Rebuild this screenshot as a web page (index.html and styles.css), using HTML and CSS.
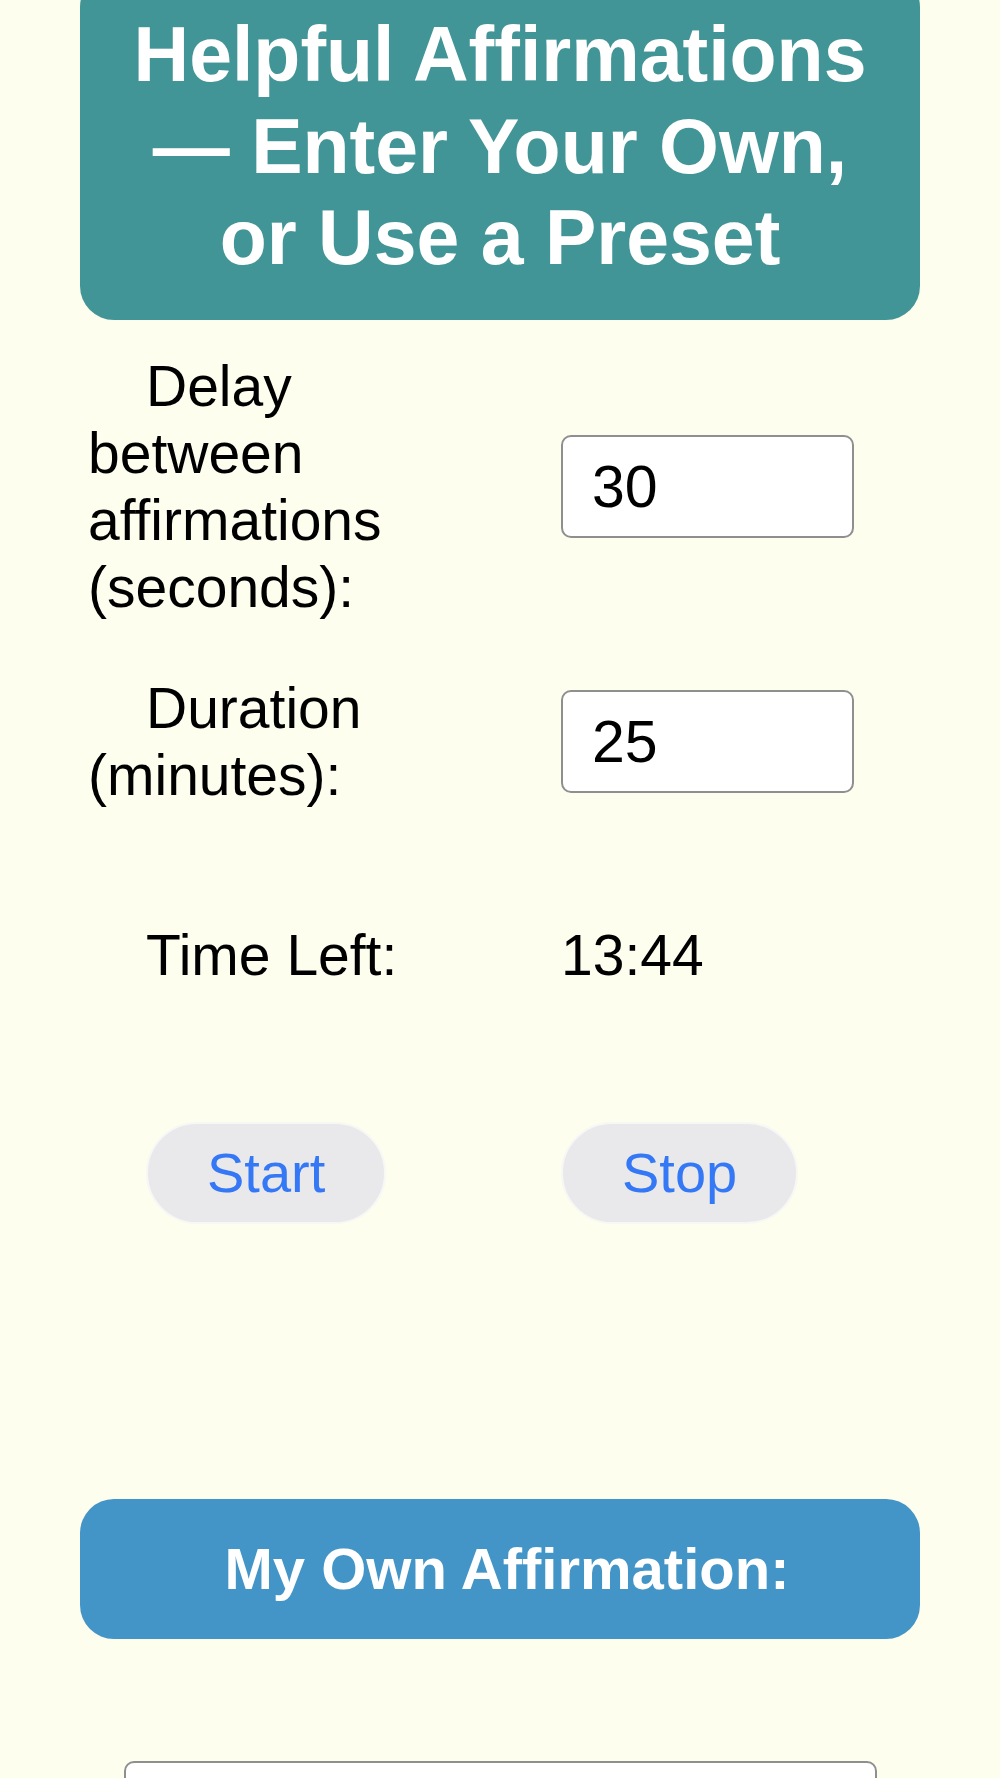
FILE: index.html
```html
<!DOCTYPE html>
<html lang="en">
<head>
    <meta charset="utf-8">
    <title>Helpful Affirmations</title>
    <link rel="stylesheet" href="styles.css">
</head>
<body>
    <header class="banner">
        <h1>Helpful Affirmations — Enter Your Own, or Use a Preset</h1>
    </header>
    <section class="settings">
        <div class="row">
            <label class="label" for="delay">Delay between affirmations (seconds):</label>
            <input type="text" id="delay" class="field" value="30">
        </div>
        <div class="row">
            <label class="label" for="duration">Duration (minutes):</label>
            <input type="text" id="duration" class="field" value="25">
        </div>
        <div class="row row-time">
            <span class="label">Time Left:</span>
            <span id="time_left">13:44</span>
        </div>
        <div class="row row-buttons">
            <div class="label"><button id="start">Start</button></div>
            <div><button id="stop">Stop</button></div>
        </div>
    </section>
    <h2 class="section-head">My Own Affirmation:</h2>
    <input type="text" id="own" class="own-field">
</body>
</html>
```
FILE: styles.css
```css
body {
    margin: 0;
    background-color: #fdfeee;
    font-family: "Liberation Sans", Arial, Helvetica, sans-serif;
    font-size: 57px;
    line-height: 67px;
    color: #000;
}
.banner {
    margin: -27px 80px 0 80px;
    padding: 36px 40px;
    border-radius: 34px;
    background-color: #429596;
    color: #fff;
    text-align: center;
}
.banner h1 {
    margin: 0;
    font-size: 77px;
    line-height: 91.5px;
    font-weight: 700;
}
.settings {
    margin-top: 33px;
    padding-left: 88px;
}
.row {
    display: grid;
    grid-template-columns: 380px 293px;
    column-gap: 93px;
    align-items: center;
}
.row + .row {
    margin-top: 54px;
}
.row-time {
    margin-top: 113px !important;
}
.row-buttons {
    margin-top: 133px !important;
}
.label {
    text-indent: 58px;
}
.field {
    box-sizing: border-box;
    width: 293px;
    height: 103px;
    padding: 0 0 0 29px;
    border: 2px solid #8f8f8f;
    border-radius: 10px;
    background-color: #fff;
    font-family: inherit;
    font-size: 59px;
    color: #000;
}
button {
    padding: 17px 59px;
    border: 2px solid #f7f7f5;
    border-radius: 60px;
    background-color: #e9e9eb;
    color: #3478f6;
    font-family: inherit;
    font-size: 56px;
    line-height: 64px;
    text-indent: 0;
}
.section-head {
    margin: 275px 80px 0 80px;
    padding: 36px 0 37px 14px;
    border-radius: 34px;
    background-color: #4395c7;
    color: #fff;
    text-align: center;
    font-size: 58px;
    line-height: 67px;
}
.own-field {
    display: block;
    box-sizing: border-box;
    width: 753px;
    height: 103px;
    margin: 122px 0 0 124px;
    border: 2px solid #8f8f8f;
    border-radius: 10px;
    background-color: #fff;
}
```
